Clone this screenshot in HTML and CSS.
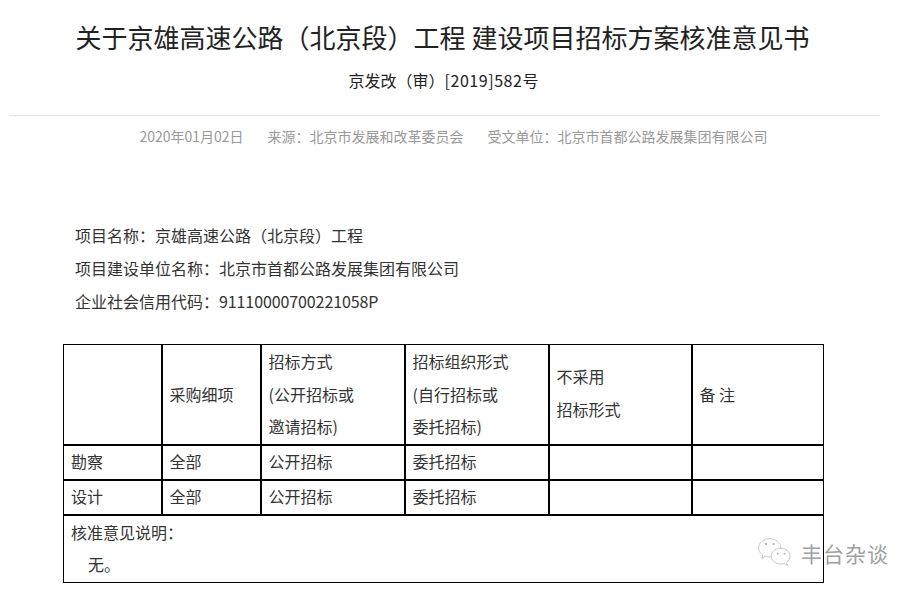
FILE: index.html
```html
<!DOCTYPE html>
<html lang="zh">
<head>
<meta charset="utf-8">
<title>核准意见书</title>
<link rel="stylesheet" href="styles.css">
</head>
<body>
<main class="page">
  <header class="head">
    <h1 class="title">关于京雄高速公路（北京段）工程 建设项目招标方案核准意见书</h1>
    <p class="docno">京发改（审）<span class="docno-num">[2019]582</span>号</p>
  </header>
  <div class="meta">
    <span>2020年01月02日</span>
    <span>来源：北京市发展和改革委员会</span>
    <span>受文单位：北京市首都公路发展集团有限公司</span>
  </div>
  <section class="info">
    <p>项目名称：京雄高速公路（北京段）工程</p>
    <p>项目建设单位名称：北京市首都公路发展集团有限公司</p>
    <p>企业社会信用代码：<span class="code">91110000700221058P</span></p>
  </section>
  <table class="grid">
    <colgroup>
      <col class="c1"><col class="c2"><col class="c3"><col class="c4"><col class="c5"><col class="c6">
    </colgroup>
    <tr class="r-head">
      <td></td>
      <td>采购细项</td>
      <td>招标方式<br>(公开招标或<br>邀请招标)</td>
      <td>招标组织形式<br>(自行招标或<br>委托招标)</td>
      <td class="raised">不采用<br>招标形式</td>
      <td>备 注</td>
    </tr>
    <tr class="r-row">
      <td>勘察</td><td>全部</td><td>公开招标</td><td>委托招标</td><td></td><td></td>
    </tr>
    <tr class="r-row">
      <td>设计</td><td>全部</td><td>公开招标</td><td>委托招标</td><td></td><td></td>
    </tr>
    <tr class="r-note">
      <td colspan="6">核准意见说明：<br><span class="indent">无。</span></td>
    </tr>
  </table>
</main>
<div class="mark">
  <svg class="mark-icon" width="36" height="32" viewBox="0 0 34 30" fill="#fff" stroke="#b4b4b4" stroke-width="0.7">
    <path d="M12 1.500C6 1.500 1.500 5.400 1.500 10.200c0 2.800 1.500 5 4 6.700l-1 3.200 3.600-2c1.300.4 2.600.6 3.900.6 5.800 0 10.500-3.800 10.500-8.500S17.900 1.500 12 1.500z"/>
    <path d="M22.500 10.500c-5 0-9 3.400-9 7.500s4 7.500 9 7.500c1.100 0 2.200-.2 3.200-.5l3 1.700-.8-2.800c2-1.400 3.300-3.500 3.300-5.900 0-4.100-3.700-7.500-8.700-7.500z"/>
    <circle cx="8.500" cy="6.500" r="1" fill="#a8a8a8" stroke="none"/>
    <circle cx="15.500" cy="6.500" r="1" fill="#a8a8a8" stroke="none"/>
    <circle cx="19.500" cy="15.500" r="0.800" fill="#a8a8a8" stroke="none"/>
    <circle cx="26" cy="15.500" r="0.800" fill="#a8a8a8" stroke="none"/>
  </svg>
  <span class="mark-text">丰台杂谈</span>
</div>
</body>
</html>
```
FILE: styles.css
```css
* { box-sizing: border-box; }
html, body { margin: 0; padding: 0; background: #fff; }
body {
  width: 918px;
  height: 594px;
  overflow: hidden;
  font-family: "Noto Sans CJK SC", "Liberation Sans", sans-serif;
  color: #333;
  position: relative;
}
.page { padding: 18px 38px 0 9px; }
.head { text-align: center; border-bottom: 1px solid #e0e0e0; height: 98px; }
.title {
  margin: 0;
  font-size: 26px;
  line-height: 38px;
  font-weight: 400;
  color: #222;
  white-space: nowrap;
  padding-right: 4px;
}
.docno { margin: 13px 0 0; font-size: 16px; line-height: 22px; color: #222; padding-right: 2px; }
.docno-num { letter-spacing: 0.55px; }
.meta {
  display: flex;
  justify-content: center;
  gap: 24px;
  margin-top: 10px;
  padding-left: 18px;
  font-size: 14px;
  line-height: 20px;
  color: #999;
}
.info { margin: 73px 0 0 66px; font-size: 16px; color: #333; }
.info p { margin: 0; line-height: 33px; }
.code { letter-spacing: -0.1px; }
.grid {
  margin: 26px 0 0 54px;
  border-collapse: collapse;
  table-layout: fixed;
  width: 760px;
  font-size: 16px;
  color: #333;
}
.c1 { width: 98px; }
.c2 { width: 99px; }
.c3 { width: 144px; }
.c4 { width: 144px; }
.c5 { width: 143px; }
.c6 { width: 132px; }
.grid td {
  border: 2px solid #000;
  padding: 0 7px 1px;
  line-height: 32.5px;
  vertical-align: middle;
}
.grid td.raised { padding-bottom: 3px; }
.r-head td { height: 100px; }
.r-row td { height: 35px; line-height: 31px; padding-bottom: 2px; }
.r-note td { height: 67px; line-height: 32px; padding-bottom: 2px; }
.grid tr:first-child td { border-top-width: 1px; }
.grid tr:last-child td { border-bottom-width: 1px; }
.grid td:first-child { border-left-width: 1px; }
.grid td:last-child { border-right-width: 1px; }
.indent { padding-left: 17px; }
.mark {
  position: absolute;
  left: 757px;
  top: 537px;
  display: flex;
  align-items: center;
  gap: 8px;
}
.mark-text {
  font-size: 21px;
  line-height: 32px;
  letter-spacing: 1px;
  color: #a0a0a0;
}
```
